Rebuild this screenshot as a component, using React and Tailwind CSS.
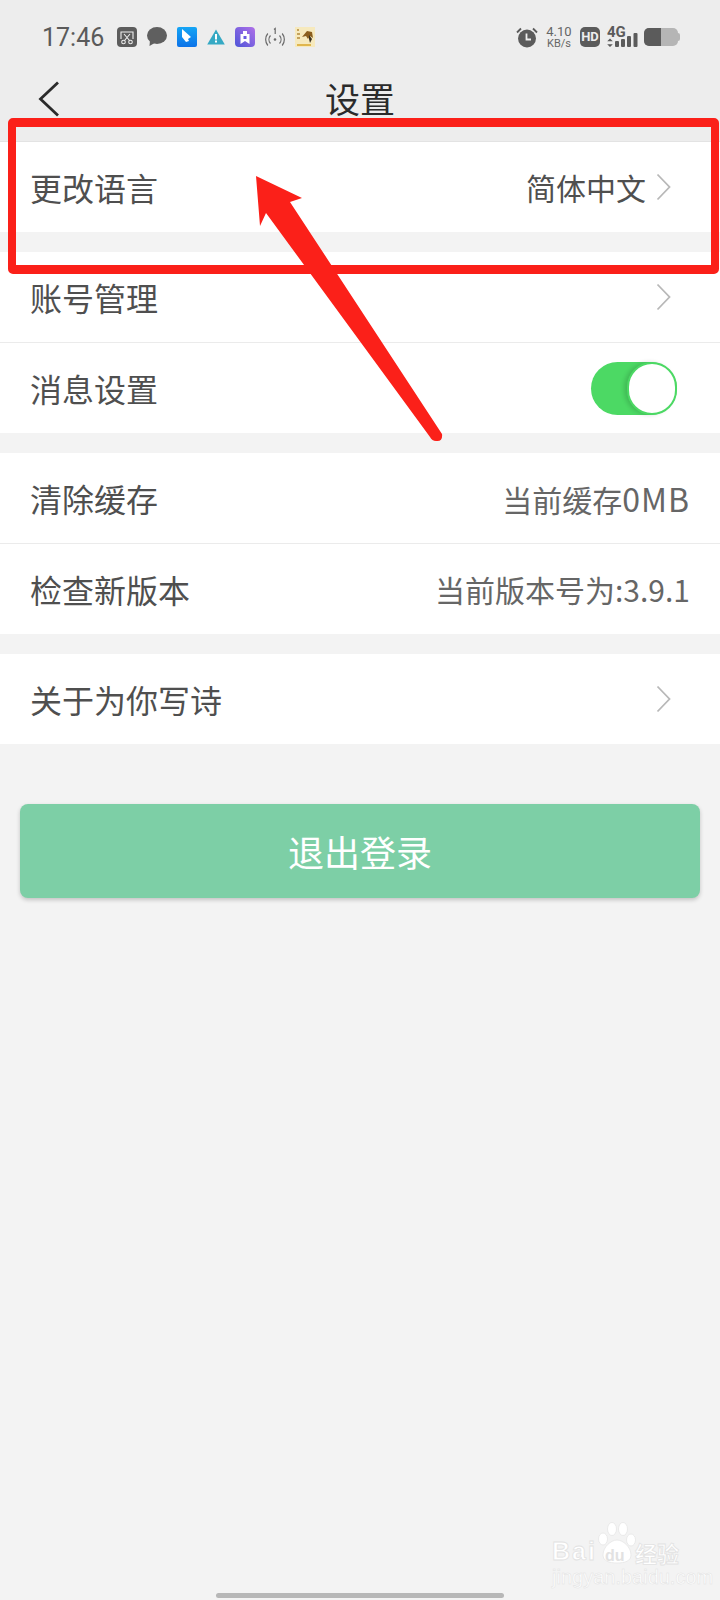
const CJK = "font-['Noto_Sans_CJK_SC','Noto_Sans',sans-serif]"

function ScreenshotIcon() {
  return (
    <svg width="20" height="20" viewBox="0 0 20 20">
      <rect width="20" height="20" rx="4" fill="#5c5c5c" />
      <path d="M4 12V5h12v7" fill="none" stroke="#eee" strokeWidth="1.1" />
      <path d="M7 7l5.500 6.500M13 7l-5.500 6.500" stroke="#eee" strokeWidth="1.1" />
      <circle cx="6.500" cy="15" r="1.800" fill="none" stroke="#eee" strokeWidth="1.100" />
      <circle cx="13.500" cy="15" r="1.800" fill="none" stroke="#eee" strokeWidth="1.100" />
    </svg>
  )
}

function BubbleIcon() {
  return (
    <svg width="20" height="20" viewBox="0 0 20 20">
      <ellipse cx="10" cy="8.500" rx="10" ry="8.500" fill="#5f5f5f" />
      <path d="M3 13l-0.500 6 6-3.500z" fill="#5f5f5f" />
    </svg>
  )
}

function BlueIcon() {
  return (
    <svg width="20" height="20" viewBox="0 0 20 20">
      <defs>
        <linearGradient id="blueTile" x1="0" y1="0" x2="0" y2="1">
          <stop offset="0" stopColor="#15a5f5" />
          <stop offset="1" stopColor="#0c72e8" />
        </linearGradient>
      </defs>
      <rect width="20" height="20" rx="2" fill="url(#blueTile)" />
      <path d="M5 2l9 8-3 2 1 2-3 1-4-5z" fill="#fff" />
    </svg>
  )
}

function WarnIcon() {
  return (
    <svg width="18" height="16" viewBox="0 0 18 16">
      <path d="M9 0.500L17.800 15.500H0.200z" fill="#35a9c4" />
      <rect x="8" y="5" width="2" height="5.500" fill="#fff" />
      <rect x="8" y="11.500" width="2" height="2" fill="#fff" />
    </svg>
  )
}

function PurpleIcon() {
  return (
    <svg width="20" height="20" viewBox="0 0 20 20">
      <defs>
        <linearGradient id="purpleTile" x1="1" y1="0" x2="0" y2="1">
          <stop offset="0" stopColor="#b070e8" />
          <stop offset="1" stopColor="#4d55d8" />
        </linearGradient>
      </defs>
      <rect width="20" height="20" rx="4" fill="url(#purpleTile)" />
      <path d="M8 4h4v3h2.500v10l-4.500-3-4.500 3V7H8z" fill="#fff" />
      <rect x="8.500" y="9" width="3" height="3" fill="#6a5be0" />
    </svg>
  )
}

function HotspotIcon() {
  return (
    <svg width="20" height="20" viewBox="0 0 20 20" fill="none" stroke="#6a6a6a" strokeWidth="1.200">
      <circle cx="10" cy="12.500" r="1.300" fill="#6a6a6a" stroke="none" />
      <path d="M5.500 8.500a6 6 0 0 0 0 8M14.500 8.500a6 6 0 0 1 0 8" />
      <path d="M2.800 6.500a9.500 9.500 0 0 0 0 12M17.200 6.500a9.500 9.500 0 0 1 0 12" />
      <path d="M9 2.500l1.200-1v5.500" />
    </svg>
  )
}

function PhotoIcon() {
  return (
    <svg width="20" height="20" viewBox="0 0 20 20">
      <rect width="20" height="20" fill="#f6e9bd" />
      <path d="M7 10l5-6 5 1 1 6-3-2-2 3-2-3z" fill="#8a5d1e" />
      <path d="M14 8l3 4-2 4-1-4z" fill="#3a3020" />
      <path d="M2 3h2M2 7h3M2 11h3" stroke="#b58a3c" strokeWidth="1.400" />
      <path d="M2 18h14" stroke="#d7a11f" strokeWidth="1.400" />
    </svg>
  )
}

function AlarmIcon() {
  return (
    <svg width="22" height="21" viewBox="0 0 22 21">
      <circle cx="11" cy="11.500" r="9" fill="#5b5b5b" />
      <path d="M1 5.500L5 1.500M21 5.500L17 1.500" stroke="#5b5b5b" strokeWidth="1.800" />
      <path d="M10.500 6.500v6h4.500" fill="none" stroke="#eee" strokeWidth="1.800" />
    </svg>
  )
}

function NetworkIcon() {
  return (
    <div className="relative w-[31px] h-[20px]">
      <span className="block text-[15px] leading-[11px] font-bold text-[#5b5b5b] font-['Roboto',sans-serif]">4G</span>
      <svg width="31" height="20" viewBox="0 0 31 20" className="absolute left-0 top-0">
        <path d="M3 11.500l2.800 2.800H0.200zM3 20l2.800-2.800H0.200z" fill="#5b5b5b" />
        <rect x="8" y="14" width="4" height="6" rx="1" fill="#5b5b5b" />
        <rect x="14" y="12" width="4" height="8" rx="1" fill="#5b5b5b" />
        <rect x="20" y="9" width="4" height="11" rx="1" fill="#5b5b5b" />
        <rect x="26.500" y="6" width="4" height="14" rx="1" fill="#5b5b5b" />
      </svg>
    </div>
  )
}

function BatteryIcon() {
  return (
    <div className="flex items-center">
      <div className="flex w-[34px] h-[18px] rounded-[5px] overflow-hidden bg-[#b5b5b5]">
        <div className="w-[17px] bg-[#5b5b5b]" />
      </div>
      <div className="w-[2px] h-[8px] rounded-r-sm bg-[#b5b5b5]" />
    </div>
  )
}

function StatusBar() {
  return (
    <div className="flex items-center justify-between h-[72px] pt-[2px] pl-[42px] pr-[40px]">
      <div className="flex items-center">
        <span className="w-[75px] text-[25px] leading-none text-[#5a5a5a] font-['Roboto',sans-serif]">17:46</span>
        <div className="flex items-center gap-[10px]">
          <ScreenshotIcon />
          <BubbleIcon />
          <BlueIcon />
          <WarnIcon />
          <PurpleIcon />
          <HotspotIcon />
          <PhotoIcon />
        </div>
      </div>
      <div className="flex items-center">
        <AlarmIcon />
        <div className="flex flex-col items-center w-[26px] ml-[8px] text-[#666] font-['Roboto',sans-serif]">
          <span className="text-[13px] leading-[12px]">4.10</span>
          <span className="text-[11px] leading-[11px]">KB/s</span>
        </div>
        <span className="w-[20px] h-[20px] ml-[8px] rounded-[5px] bg-[#5b5b5b] text-center text-[13px] font-bold leading-[20px] text-[#eee] font-['Roboto',sans-serif]">HD</span>
        <div className="ml-[7px]">
          <NetworkIcon />
        </div>
        <div className="ml-[6px]">
          <BatteryIcon />
        </div>
      </div>
    </div>
  )
}

function Header() {
  return (
    <div className="relative flex items-center justify-center h-[70px] border-b border-[#e3e3e3]">
      <svg width="22" height="36" viewBox="0 0 22 36" className="absolute left-[38px] top-[9px]">
        <path d="M20 1.500L2.500 18 20 34.500" fill="none" stroke="#2b2b2b" strokeWidth="2.800" />
      </svg>
      <span className="mt-[-18px] text-[35px] leading-none text-[#2b2b2b]">设置</span>
    </div>
  )
}

function Row({ label, divider, children }) {
  return (
    <div className={`flex items-center justify-between pl-[30px] bg-white ${divider ? 'h-[91px] border-b border-[#ebebeb]' : 'h-[90px]'}`}>
      <span className="mt-[-1px] text-[32px] leading-none text-[#4f4f4f]">{label}</span>
      {children}
    </div>
  )
}

function Chevron() {
  return (
    <svg width="15" height="28" viewBox="0 0 15 28" className="mr-[49px]">
      <path d="M1.500 1.500L13.500 14 1.500 26.500" fill="none" stroke="#b8b8b8" strokeWidth="1.800" />
    </svg>
  )
}

function Toggle() {
  return (
    <div className="flex justify-end w-[86px] h-[53px] mr-[43px] rounded-full bg-[#4cd964]">
      <div className="w-[50px] h-[53px] rounded-full bg-white border-[2px] border-[#4cd964] shadow-[-3px_0_4px_rgba(0,0,0,0.14)]" />
    </div>
  )
}

function Value({ children }) {
  return <span className="mt-[-1px] mr-[30px] text-[30px] leading-none text-[#666]">{children}</span>
}

function Watermark() {
  return (
    <div className="absolute left-[552px] top-[1520px] w-[140px] h-[70px]">
      <svg width="40" height="44" viewBox="0 0 40 44" className="absolute left-[45px] top-0" fill="#fff" stroke="#e6e6e6" strokeWidth="0.800">
        <ellipse cx="6" cy="19" rx="4.500" ry="6" />
        <ellipse cx="15" cy="9" rx="4.500" ry="6.500" />
        <ellipse cx="26" cy="9" rx="4.500" ry="6.500" />
        <ellipse cx="34" cy="20" rx="4.500" ry="6" />
        <path d="M20 20c6 0 14 7 14 15 0 6-6 8-14 8S6 41 6 35c0-8 8-15 14-15z" />
      </svg>
      <span className="absolute left-0 top-[19px] text-[25px] leading-none font-bold tracking-[2px] text-white font-['Liberation_Sans',sans-serif] [-webkit-text-stroke:0.8px_#e2e2e2]">Bai</span>
      <span className="absolute left-[53px] top-[28px] text-[16px] leading-none font-bold text-[#e2e2e2] font-['Liberation_Sans',sans-serif]">du</span>
      <span className="absolute left-[83px] top-[21px] text-[22px] leading-none font-bold text-white [-webkit-text-stroke:0.8px_#e2e2e2]">经验</span>
      <span className="absolute left-0 top-[47px] text-[20px] leading-none text-white font-['Liberation_Sans',sans-serif] [-webkit-text-stroke:0.5px_#e2e2e2]">jingyan.baidu.com</span>
    </div>
  )
}

export default function App() {
  return (
    <div className={`relative w-[720px] h-[1600px] overflow-hidden bg-[#f3f3f3] ${CJK}`}>
      <div className="bg-[#ededed]">
        <StatusBar />
        <Header />
      </div>

      <Row label="更改语言">
        <div className="flex items-center">
          <span className="mt-[-1px] mr-[10px] text-[30px] leading-none text-[#4f4f4f]">简体中文</span>
          <Chevron />
        </div>
      </Row>

      <div className="mt-[20px]">
        <Row label="账号管理" divider>
          <Chevron />
        </Row>
        <Row label="消息设置">
          <Toggle />
        </Row>
      </div>

      <div className="mt-[20px]">
        <Row label="清除缓存" divider>
          <Value>
            当前缓存<span className="text-[32px] tracking-[1px]">0MB</span>
          </Value>
        </Row>
        <Row label="检查新版本">
          <Value>当前版本号为:3.9.1</Value>
        </Row>
      </div>

      <div className="mt-[20px]">
        <Row label="关于为你写诗">
          <Chevron />
        </Row>
      </div>

      <div className="flex items-center justify-center h-[94px] mx-[20px] mt-[60px] rounded-[8px] bg-[#7dcfa6] shadow-[0_2px_4px_rgba(0,0,0,0.2)]">
        <span className="text-[36px] leading-none text-white">退出登录</span>
      </div>

      <Watermark />

      {/* home indicator */}
      <div className="absolute left-[216px] top-[1593px] w-[288px] h-[5px] rounded-full bg-[#b7b7b7]" />

      {/* red annotation over the screenshot */}
      <div className="absolute left-[8px] top-[118px] w-[711px] h-[156px] border-x-[8px] border-y-[9px] border-[#fb2019] rounded-[5px]" />
      <svg width="720" height="480" viewBox="0 0 720 480" className="absolute left-0 top-0 pointer-events-none">
        <path d="M256 176L302 198 290 202 442 434Q443 442 436 441 432 441 430 437L266 213 260 226z" fill="#fb2019" />
      </svg>
    </div>
  )
}
